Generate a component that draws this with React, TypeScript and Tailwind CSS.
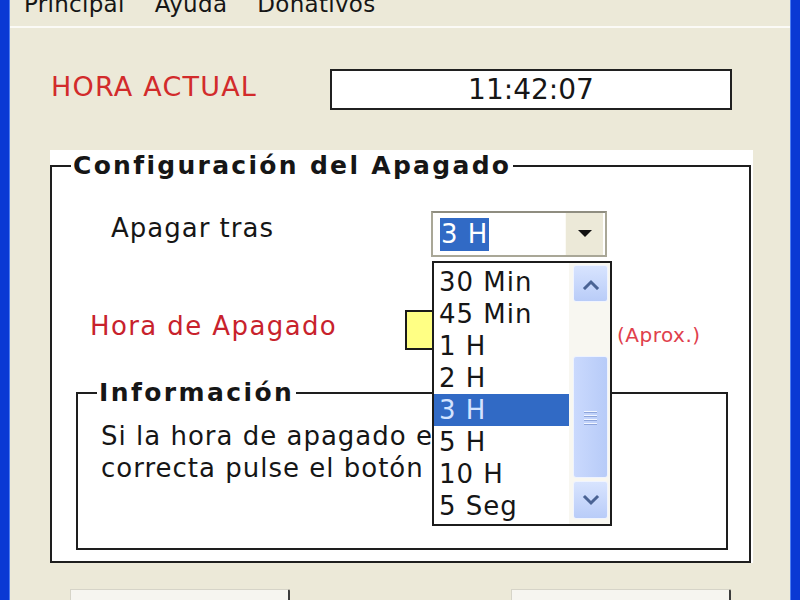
import React from "react";

const options = ["30 Min", "45 Min", "1 H", "2 H", "3 H", "5 H", "10 H", "5 Seg"];
const selected = "3 H";

const Chevron = ({ up }: { up?: boolean }) => (
  <svg width="18" height="12" viewBox="0 0 18 12">
    <path
      d={up ? "M3 10 L9 4 L15 10" : "M3 3 L9 9 L15 3"}
      fill="none"
      stroke="#4a6394"
      strokeWidth="3"
      strokeLinecap="square"
    />
  </svg>
);

const ScrollButton = ({ up, className }: { up?: boolean; className: string }) => (
  <div
    className={`${className} flex items-center justify-center rounded-[3px] border border-[#f0f4ff] bg-gradient-to-b from-[#d8e4fe] to-[#b9ccf8]`}
  >
    <Chevron up={up} />
  </div>
);

const DropdownList = () => (
  <div className="absolute left-[-1px] top-[48px] z-10 flex h-[265px] w-[180px] border-2 border-[#1c1c1c] bg-white">
    <div className="w-[135px] flex-none pt-[3px]">
      {options.map((opt) => (
        <div
          key={opt}
          className={
            opt === selected
              ? "flex h-[32px] items-center bg-[#316ac5] pl-[5px] text-[#d3e3ff]"
              : "flex h-[32px] items-center pl-[5px]"
          }
        >
          {opt}
        </div>
      ))}
    </div>
    <div className="flex flex-1 flex-col bg-[#f8f7f1] pl-[4px] pr-[2px] pt-[2px]">
      <ScrollButton up className="h-[37px]" />
      <div className="h-[54px]" />
      <div className="flex h-[122px] items-center justify-center rounded-[3px] border border-[#eef3ff] bg-gradient-to-r from-[#cad9fd] to-[#b7cbf8]">
        <div className="flex flex-col gap-[3px]">
          {[0, 1, 2, 3].map((i) => (
            <div key={i} className="h-[1px] w-[13px] bg-[#f2f6ff] shadow-[0_1px_0_#8ea5da]" />
          ))}
        </div>
      </div>
      <div className="h-[3px]" />
      <ScrollButton className="h-[38px]" />
    </div>
  </div>
);

const ComboBox = () => (
  <div className="relative flex h-[46px] w-[176px] flex-none items-center border-2 border-[#a9a797] border-t-[#8f8d80] bg-white">
    <div className="flex flex-1 items-center pl-[7px]">
      <span className="flex h-[33px] items-center bg-[#316ac5] px-[1px] text-white">{selected}</span>
    </div>
    <div className="mr-[2px] flex h-full w-[38px] items-center justify-center border-l border-[#fbfaf5] bg-[#ece9d8]">
      <svg width="14" height="8" viewBox="0 0 14 8">
        <polygon points="0,0 14,0 7,7" fill="#111" />
      </svg>
    </div>
    <DropdownList />
  </div>
);

const FooterButton = () => (
  <div className="h-[30px] w-[220px] rounded-tr-[2px] border-l border-t border-[#d6d4c8] border-r-2 border-r-[#3c3c3c] bg-[#f6f5f0]" />
);

export default function App() {
  return (
    <div className="flex h-[600px] w-[800px] overflow-hidden bg-[#ece9d8] font-['DejaVu_Sans',sans-serif] text-[#161616]">
      <div className="w-[10px] flex-none border-r border-[#4f7ef0] bg-[#0a39d4]" />

      <div className="flex flex-1 flex-col">
        {/* menu bar */}
        <div className="h-[28px] flex-none overflow-hidden border-b-2 border-[#fbfaf6]">
          <div className="-mt-[8px] flex gap-[30px] pl-[14px] text-[23px] leading-[24px] tracking-[0.3px]">
            <span>Principal</span>
            <span>Ayuda</span>
            <span>Donativos</span>
          </div>
        </div>

        {/* current time */}
        <div className="mt-[41px] flex h-[41px] items-center">
          <div className="w-[320px] pb-[5px] pl-[41px] text-[27px] tracking-[1.2px] text-[#d22b2b]">
            HORA ACTUAL
          </div>
          <div className="flex h-[41px] w-[402px] items-center justify-center border-2 border-[#202020] bg-white text-[28px]">
            11:42:07
          </div>
        </div>

        {/* shutdown settings */}
        <div className="ml-[40px] mt-[40px] h-[416px] w-[703px] bg-white pt-[2px]">
          <fieldset className="h-[411px] w-[701px] border-2 border-[#1e1e1e] text-[26px] tracking-[1px]">
            <legend className="ml-[19px] px-[2px] text-[25px] font-bold leading-[28px] tracking-[2.3px]">
              Configuración del Apagado
            </legend>

            <div className="mt-[31px] flex h-[46px] items-center">
              <div className="w-[379px] flex-none pb-[12px] pl-[59px]">Apagar tras</div>
              <ComboBox />
            </div>

            <div className="mt-[53px] flex h-[40px] items-center">
              <div className="w-[353px] flex-none pb-[8px] pl-[38px] tracking-[1.4px] text-[#c8222c]">
                Hora de Apagado
              </div>
              <div className="h-[40px] w-[196px] flex-none border-2 border-[#1a1a1a] bg-[#ffff84]" />
              <div className="ml-[16px] pt-[10px] text-[20px] tracking-[0.5px] text-[#e0404c]">(Aprox.)</div>
            </div>

            <fieldset className="ml-[24px] mt-[29px] h-[171px] w-[652px] border-2 border-[#1e1e1e]">
              <legend className="ml-[19px] px-[2px] text-[25px] font-bold leading-[28px] tracking-[2.4px]">
                Información
              </legend>
              <p className="pl-[23px] pt-[13px] leading-[32px]">
                Si la hora de apagado es
                <br />
                correcta pulse el botón OK
              </p>
            </fieldset>
          </fieldset>
        </div>

        {/* action buttons */}
        <div className="mt-[26px] flex justify-between pl-[60px] pr-[59px]">
          <FooterButton />
          <FooterButton />
        </div>
      </div>

      <div className="w-[10px] flex-none border-l border-[#4f7ef0] bg-[#0a39d4]" />
    </div>
  );
}
